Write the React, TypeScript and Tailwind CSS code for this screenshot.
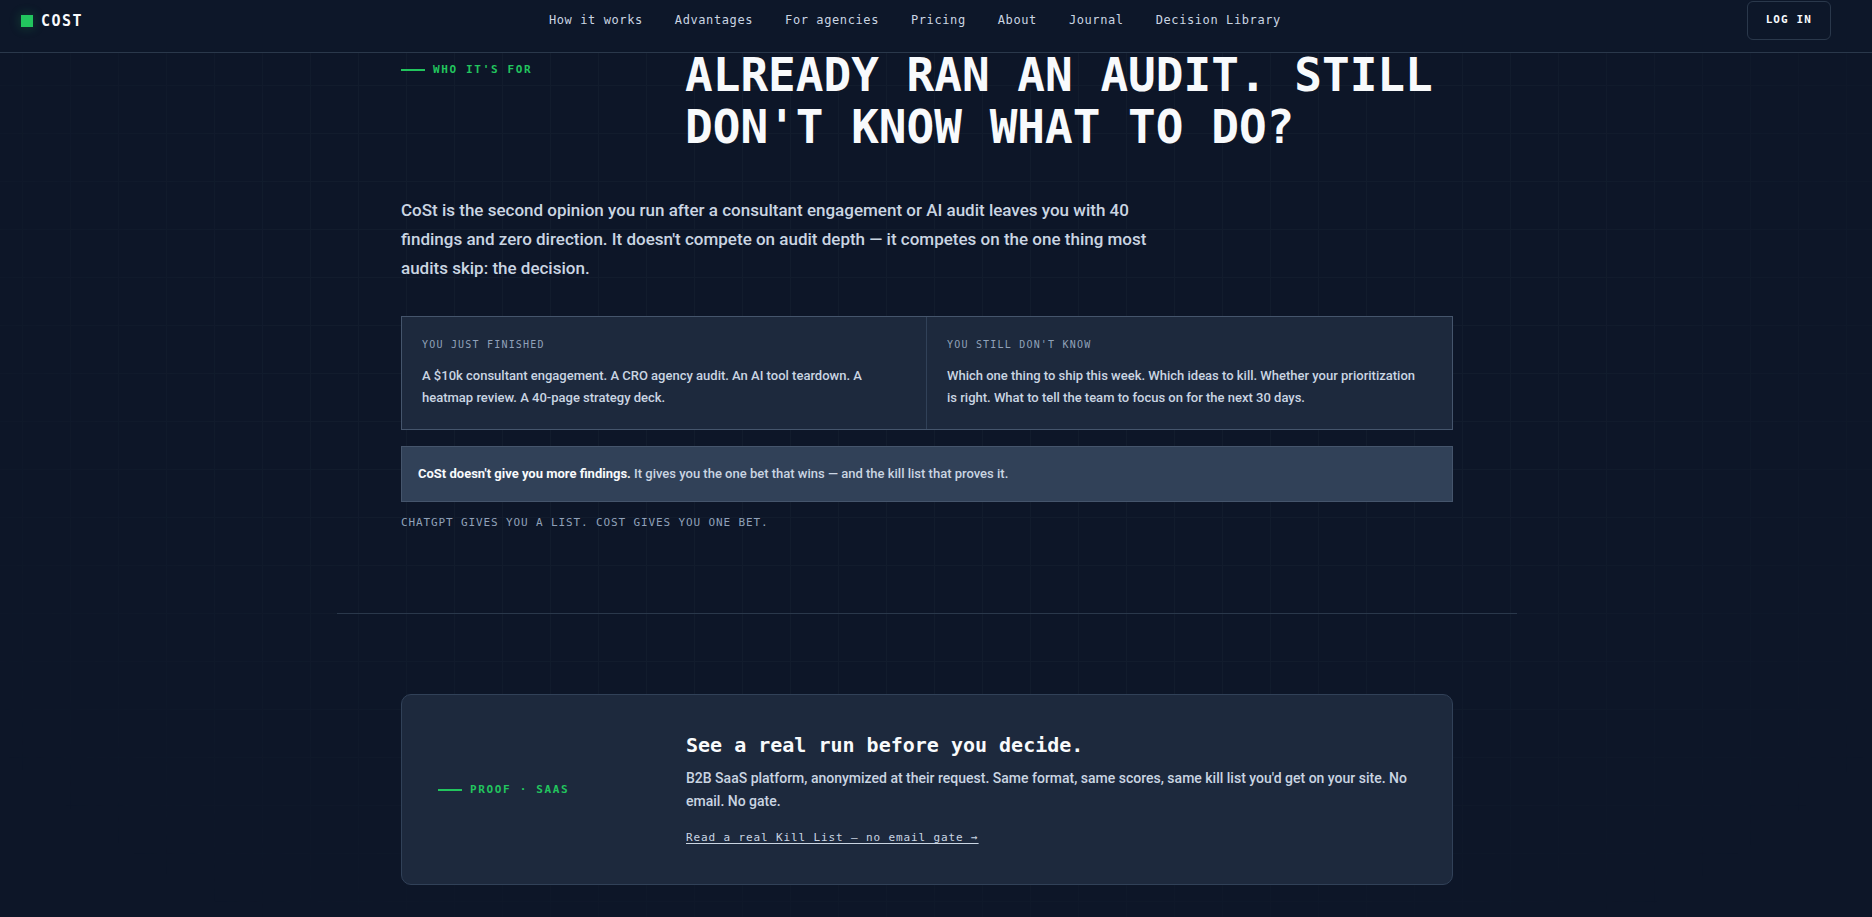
const navLinks = ["How it works", "Advantages", "For agencies", "Pricing", "About", "Journal", "Decision Library"];

const columns = [
  {
    label: "You just finished",
    text: "A $10k consultant engagement. A CRO agency audit. An AI tool teardown. A heatmap review. A 40-page strategy deck.",
  },
  {
    label: "You still don't know",
    text: "Which one thing to ship this week. Which ideas to kill. Whether your prioritization is right. What to tell the team to focus on for the next 30 days.",
  },
];

function Eyebrow({ children }: { children: string }) {
  return (
    <p className="flex items-center gap-2 font-['DejaVu_Sans_Mono',monospace] text-[11px] leading-4 font-bold uppercase tracking-[0.15em] text-[#22c55e]">
      <span className="h-0.5 w-6 bg-[#22c55e]" />
      {children}
    </p>
  );
}

function Header() {
  return (
    <header className="relative z-10 flex items-start justify-between border-b border-[#2a384b] bg-[#0d1729] pt-px pr-[41px] pb-[11px] pl-[21px] font-['DejaVu_Sans_Mono',monospace]">
      <a href="#" className="flex h-10 items-center gap-2 text-[15px] font-bold tracking-[0.1em] text-slate-50">
        <span className="size-3 bg-[#22c55e] shadow-[0_0_12px_rgba(34,197,94,0.3)]" />
        COST
      </a>
      <nav className="flex h-[38px] items-center gap-8 text-xs tracking-wider text-slate-300">
        {navLinks.map((link) => (
          <a key={link} href="#">
            {link}
          </a>
        ))}
      </nav>
      <button className="h-[39px] rounded-md border border-[#2a384b] px-[18px] text-[11px] font-bold uppercase tracking-widest text-slate-50">
        Log in
      </button>
    </header>
  );
}

function WhoItsFor() {
  return (
    <section className="border-b border-[#2a384b] px-16 pb-[82px]">
      <div className="grid grid-cols-[220px_1fr] gap-16">
        <div className="pt-[13px]">
          <Eyebrow>Who it's for</Eyebrow>
        </div>
        <h2 className="font-['DejaVu_Sans_Mono',monospace] text-[46px] leading-[52px] font-bold uppercase text-slate-50">
          Already ran an audit. Still don't know what to do?
        </h2>
      </div>
      <p className="mt-[43px] max-w-[780px] text-[17px] leading-[29px] font-medium text-slate-300">
        CoSt is the second opinion you run after a consultant engagement or AI audit leaves you with 40 findings and
        zero direction. It doesn't compete on audit depth — it competes on the one thing most audits skip: the decision.
      </p>
      <div className="mt-[33px] grid grid-cols-2 border border-slate-600 bg-slate-800">
        {columns.map((column) => (
          <div key={column.label} className="border-r border-slate-700 p-5 last:border-r-0">
            <h3 className="font-['DejaVu_Sans_Mono',monospace] text-[10px] leading-4 uppercase tracking-[0.12em] text-slate-400">
              {column.label}
            </h3>
            <p className="mt-3 pr-1 text-[13px] leading-[22px] font-medium text-slate-300">{column.text}</p>
          </div>
        ))}
      </div>
      <p className="mt-4 border border-slate-600 bg-slate-700 p-4 text-[13px] leading-[22px] font-medium text-slate-300">
        <strong className="font-bold text-slate-50">CoSt doesn't give you more findings.</strong> It gives you the one
        bet that wins — and the kill list that proves it.
      </p>
      <p className="mt-[13px] font-['DejaVu_Sans_Mono',monospace] text-[11px] leading-4 uppercase tracking-[0.08em] text-slate-400">
        ChatGPT gives you a list. CoSt gives you one bet.
      </p>
    </section>
  );
}

function Proof() {
  return (
    <section className="px-16 pt-20 pb-7">
      <div className="grid grid-cols-[200px_1fr] items-center gap-12 rounded-[10px] border border-slate-700 bg-slate-800 p-9">
        <Eyebrow>Proof · SaaS</Eyebrow>
        <div>
          <h2 className="font-['DejaVu_Sans_Mono',monospace] text-xl leading-7 font-bold text-slate-50">
            See a real run before you decide.
          </h2>
          <p className="mt-2 text-sm leading-[23px] font-medium text-slate-300">
            B2B SaaS platform, anonymized at their request. Same format, same scores, same kill list you'd get on your
            site. No email. No gate.
          </p>
          <a
            href="#"
            className="mt-[17px] inline-block font-['DejaVu_Sans_Mono',monospace] text-[11px] leading-4 tracking-[0.08em] text-slate-300 underline underline-offset-2"
          >
            Read a real Kill List — no email gate →
          </a>
        </div>
      </div>
    </section>
  );
}

export default function App() {
  return (
    <div className="relative isolate min-h-screen bg-[#0d1628] font-['Roboto',sans-serif]">
      {/* faint 48px grid that fades towards the bottom corners */}
      <div className="absolute inset-0 -z-10 bg-[linear-gradient(to_right,#121c2d_1px,transparent_1px),linear-gradient(to_bottom,#121c2d_1px,transparent_1px)] bg-size-[48px_48px] bg-position-[22px_37px] mask-[radial-gradient(ellipse_at_50%_30%,black_50%,transparent_88%)]" />
      <Header />
      {/* the headline tucks slightly under the header */}
      <main className="-mt-1 pr-[18px]">
        <div className="mx-auto max-w-[1180px]">
          <WhoItsFor />
          <Proof />
        </div>
      </main>
    </div>
  );
}
